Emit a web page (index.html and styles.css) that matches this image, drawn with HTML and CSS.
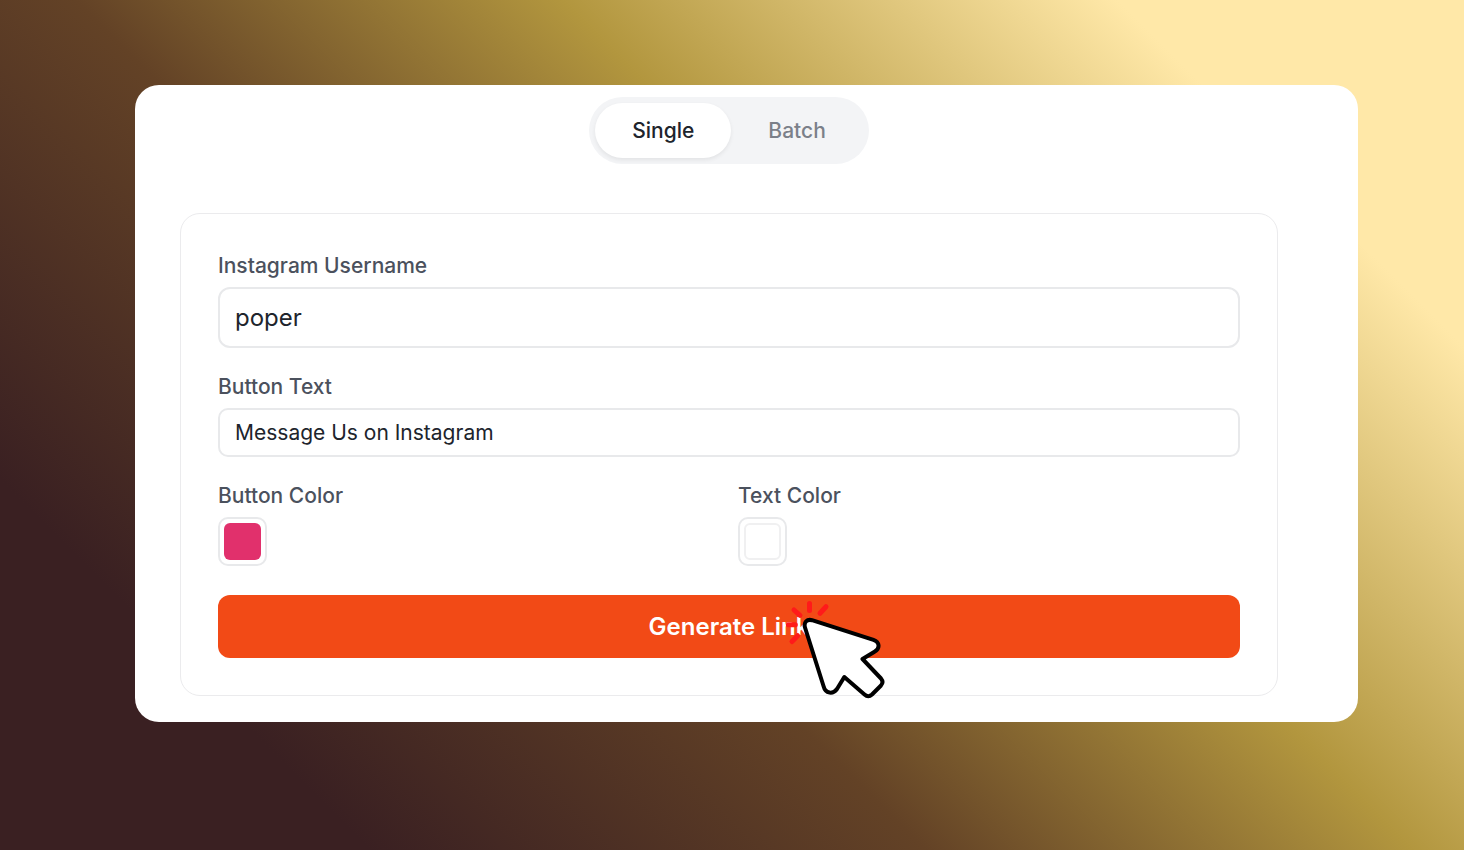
FILE: index.html
```html
<!DOCTYPE html>
<html lang="en">
<head>
<meta charset="utf-8">
<meta name="viewport" content="width=device-width, initial-scale=1">
<title>Instagram Link Generator</title>
<link rel="stylesheet" href="styles.css">
</head>
<body>
<main class="card">
  <div class="tabs" role="tablist">
    <button class="tab tab-active" type="button" role="tab" aria-selected="true">Single</button>
    <button class="tab" type="button" role="tab" aria-selected="false">Batch</button>
  </div>
  <form class="panel">
    <div class="field">
      <label class="label" for="username">Instagram Username</label>
      <input class="input input-large" id="username" type="text" value="poper">
    </div>
    <div class="field">
      <label class="label" for="button-text">Button Text</label>
      <input class="input" id="button-text" type="text" value="Message Us on Instagram">
    </div>
    <div class="colors">
      <div class="field">
        <label class="label" for="button-color">Button Color</label>
        <input class="swatch" id="button-color" type="color" value="#e1306c">
      </div>
      <div class="field">
        <label class="label" for="text-color">Text Color</label>
        <input class="swatch swatch-light" id="text-color" type="color" value="#ffffff">
      </div>
    </div>
    <div class="action">
      <button class="submit" type="button">Generate Link</button>
      <svg class="cursor" width="106" height="106" viewBox="0 0 106 106" aria-hidden="true">
        <path d="M29.500 8.500V15.500M46 11.700L40 18.300M14 15L20 20.300M8.300 29.800H15.300M17.700 40.700L12 46.500" stroke="#ff1a1a" stroke-width="5" stroke-linecap="round"/>
        <path d="M32 25.200C27 23.800 23.500 27.500 25 32.500L43.500 91C45.500 99 53 99.500 57 94L64.300 82L84.500 99.500Q88.300 103 92 99.500L101 90.500Q104 87.200 101 83.500L82.500 64L94.500 56.800C100.500 53.500 99.500 46.800 93.500 44.800Z" fill="#fff" stroke="#000" stroke-width="4" stroke-linejoin="round"/>
      </svg>
    </div>
  </form>
</main>
</body>
</html>
```

FILE: styles.css
```css
* {
  box-sizing: border-box;
}

body {
  margin: 0;
  min-height: 100vh;
  padding: 85px 106px 85px 135px;
  background: linear-gradient(45deg, #3a2022 16%, #634226 40%, #b2963e 61%, #ffe8a8 85%);
  font-family: Inter, "Liberation Sans", sans-serif;
  color: #20242c;
}

button,
input {
  font: inherit;
  color: inherit;
}

.card {
  display: flex;
  flex-direction: column;
  align-items: stretch;
  gap: 49px;
  padding: 12px 80px 26px 45px;
  border-radius: 24px;
  background: #fff;
}

.tabs {
  display: flex;
  align-self: center;
  padding: 6px;
  border-radius: 34px;
  background: #f3f4f6;
}

.tab {
  padding: 0 37px;
  border: 0;
  border-radius: 28px;
  background: transparent;
  color: #7b8089;
  font-size: 21px;
  font-weight: 500;
  line-height: 55px;
}

.tab-active {
  background: #fff;
  color: #20242c;
  box-shadow: 0 2px 4px rgba(0, 0, 0, 0.07);
}

.panel {
  display: flex;
  flex-direction: column;
  gap: 24px;
  padding: 37px;
  border: 1px solid #ebebed;
  border-radius: 20px;
}

.field {
  display: flex;
  flex-direction: column;
  align-items: flex-start;
  gap: 6px;
}

.label {
  color: #4b515d;
  font-size: 21px;
  font-weight: 500;
  line-height: 30px;
}

.input {
  width: 100%;
  height: 49px;
  padding: 0 15px;
  border: 2px solid #e8e9eb;
  border-radius: 10px;
  background: #fff;
  font-size: 21px;
}

.input-large {
  height: 61px;
  border-radius: 12px;
  font-size: 24px;
}

.colors {
  display: grid;
  grid-template-columns: 1fr 1fr;
  gap: 18px;
}

.swatch {
  width: 49px;
  height: 49px;
  padding: 4px;
  border: 2px solid #e8e9eb;
  border-radius: 10px;
  background: #fff;
  appearance: none;
}

.swatch::-webkit-color-swatch-wrapper {
  padding: 0;
}

.swatch::-webkit-color-swatch {
  border: 0;
  border-radius: 6px;
}

.swatch-light::-webkit-color-swatch {
  border: 2px solid #f0f0f1;
}

.action {
  position: relative;
  margin-top: 5px;
}

.submit {
  display: block;
  width: 100%;
  padding: 0;
  border: 0;
  border-radius: 12px;
  background: #f24a16;
  color: #fff;
  font-size: 24px;
  font-weight: 600;
  line-height: 63px;
}

.cursor {
  position: absolute;
  top: 0;
  left: calc(50% + 51px);
  pointer-events: none;
}
```
